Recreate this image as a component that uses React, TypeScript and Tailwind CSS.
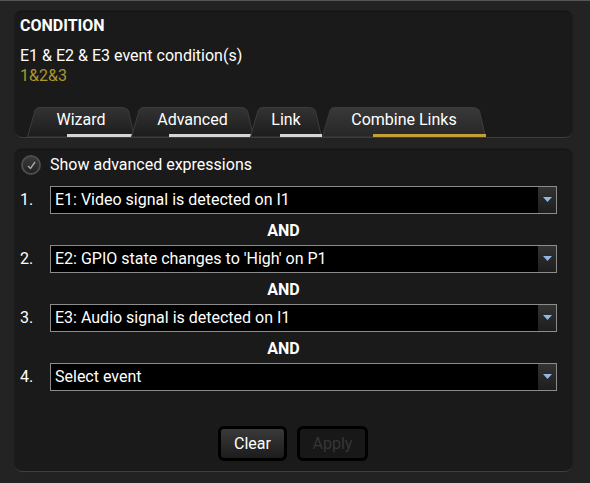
import type { JSX } from "react";

type TabProps = {
    readonly label: string;
    readonly width: number;
    readonly barLeft: number;
    readonly active?: boolean;
    readonly className: string;
};

const Tab = ({ label, width, barLeft, active, className }: TabProps): JSX.Element => {
    const w = width;
    const d = `M0.5 30 L8 3.5 Q9 0.5 12.5 0.5 L${w - 13} 0.5 Q${w - 8} 0.5 ${w - 6.5} 4 L${w - 0.5} 30 Z`;
    const gid = `tab-${label.replace(/\s/g, "")}`;
    return (
        <div className={`relative h-[30px] shrink-0 ${className}`} style={{ width: w }}>
            <svg className="absolute inset-0" width={w} height={30} viewBox={`0 0 ${w} 30`}>
                <defs>
                    <linearGradient id={gid} x1="0" y1="0" x2="0" y2="1">
                        <stop offset="0" stopColor={active ? "#393939" : "#333333"} />
                        <stop offset="1" stopColor={active ? "#262626" : "#1c1c1c"} />
                    </linearGradient>
                </defs>
                <path d={d} fill={`url(#${gid})`} stroke="#3c3c3c" strokeWidth="1" />
            </svg>
            <div className="relative pt-[3px] text-center text-[16px] leading-[20px] text-white">{label}</div>
            <div
                className={`absolute bottom-0 h-[3px] ${active ? "bg-[#c4a034]" : "bg-[#d4d4d4]"}`}
                style={{ left: barLeft, right: 0 }}
            />
        </div>
    );
};

const Select = ({ text }: { readonly text: string }): JSX.Element => (
    <div className="flex h-[28px] w-[507px] border border-[#8c8c8c] bg-black">
        <div className="flex-1 pl-[4px] text-[16px] leading-[26px] text-white">{text}</div>
        <div className="flex w-[18px] items-center justify-center bg-gradient-to-b from-[#333333] to-[#1e1e1e]">
            <svg width="9" height="6" viewBox="0 0 9 6">
                <path d="M0 0 H9 L4.5 5 Z" fill="#8fb8e6" />
            </svg>
        </div>
    </div>
);

const Row = ({ n, text }: { readonly n: string; readonly text: string }): JSX.Element => (
    <div className="flex items-center">
        <div className="w-[30px] text-[16px] leading-[20px] text-white">{n}</div>
        <Select text={text} />
    </div>
);

const And = (): JSX.Element => (
    <div className="h-[31px] w-[527px] pt-[7px] text-center text-[16px] font-bold leading-[20px] text-white">AND</div>
);

export default function App(): JSX.Element {
    return (
        <div className="h-[483px] w-[590px] overflow-hidden bg-[#232323] font-['Roboto',sans-serif]">
            <div className="h-px bg-[#555555]" />
            <div className="ml-[15px] mt-[11px] w-[557px] rounded-[7px] border-b border-[#3e3e3e] bg-[#1a1a1a] shadow-[0_-1px_2px_rgba(0,0,0,0.6)]">
                <div className="px-[5px] pt-[4px]">
                    <div className="text-[16px] font-bold leading-[20px] text-white">CONDITION</div>
                    <div className="mt-[10px] text-[16px] leading-[20px] text-white">E1 &amp; E2 &amp; E3 event condition(s)</div>
                    <div className="text-[16px] leading-[20px] text-[#ab972e]">1&amp;2&amp;3</div>
                </div>
                <div className="mt-[21px] flex pl-[12px]">
                    <Tab label="Wizard" width={108} barLeft={40} className="" />
                    <Tab label="Advanced" width={123} barLeft={38} className="-ml-[4px]" />
                    <Tab label="Link" width={72} barLeft={30} className="-ml-[4px]" />
                    <Tab label="Combine Links" width={164} barLeft={51} active className="" />
                </div>
            </div>

            <div className="ml-[15px] mt-[12px] h-[322px] w-[557px] rounded-[7px] border-b border-[#3e3e3e] bg-[#1a1a1a] px-[5px] pt-[5px] shadow-[0_-1px_2px_rgba(0,0,0,0.6)]">
                <div className="flex items-center">
                    <div className="ml-[1px] flex h-[20px] w-[20px] items-center justify-center rounded-full border-2 border-[#4c4c4c] bg-gradient-to-b from-[#3a3a3a] to-[#222222]">
                        <svg width="11" height="11" viewBox="0 0 11 11">
                            <path d="M2 6 L4.5 8.5 L9 2" fill="none" stroke="#a8a8a8" strokeWidth="1.4" />
                        </svg>
                    </div>
                    <div className="ml-[9px] text-[16px] leading-[20px] text-white">Show advanced expressions</div>
                </div>
                <div className="mt-[11px]">
                    <Row n="1." text="E1: Video signal is detected on I1" />
                    <And />
                    <Row n="2." text="E2: GPIO state changes to 'High' on P1" />
                    <And />
                    <Row n="3." text="E3: Audio signal is detected on I1" />
                    <And />
                    <Row n="4." text="Select event" />
                </div>
                <div className="mt-[35px] flex justify-center gap-[10px] pr-[1px]">
                    <button className="h-[35px] w-[69px] rounded-[6px] border-[3px] border-black bg-gradient-to-b from-[#3a3a3a] to-[#1c1c1c] text-[16px] text-white">
                        Clear
                    </button>
                    <button className="h-[35px] w-[71px] rounded-[6px] border-[3px] border-black bg-[#181818] text-[16px] text-[#363636]">
                        Apply
                    </button>
                </div>
            </div>
        </div>
    );
}
